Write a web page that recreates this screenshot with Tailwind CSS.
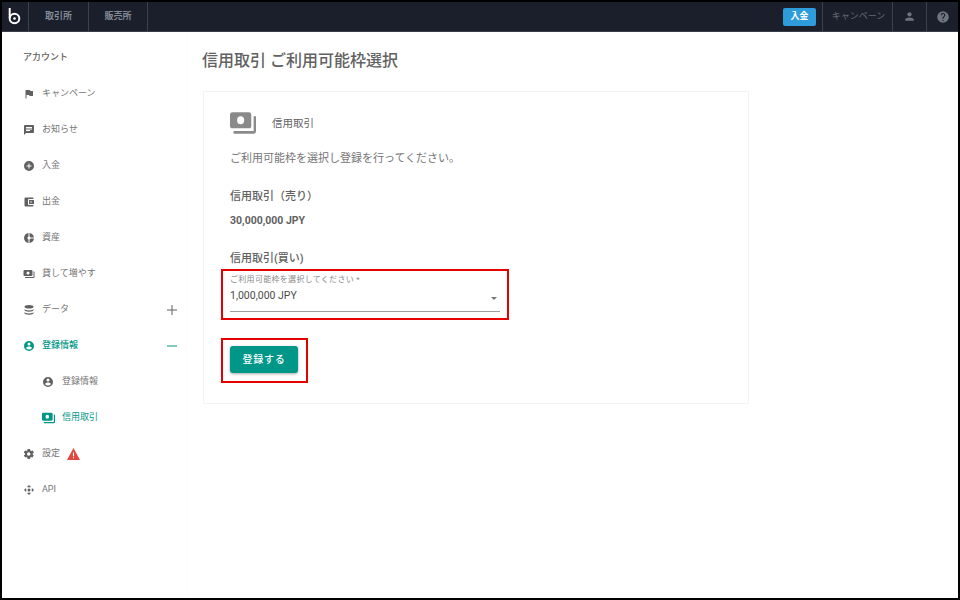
<!DOCTYPE html>
<html lang="ja">
  <head>
    <meta charset="UTF-8" />
    <title>信用取引 ご利用可能枠選択</title>
    <script src="https://cdn.jsdelivr.net/npm/@tailwindcss/browser@4"></script>
  </head>
  <body class="font-['Roboto','Noto_Sans_CJK_JP',sans-serif]">
    <div class="w-[960px] h-[600px] border-2 border-black bg-white flex flex-col overflow-hidden">
      <!-- Header -->
      <header class="h-[30px] bg-[#1b1f2c] flex items-stretch shrink-0 text-[9px] font-bold text-[#858b97] border-b border-[#3a3e49]">
        <div class="w-[27px] flex items-center justify-center border-r border-[#3d414c]">
          <svg class="-ml-[2px]" width="13" height="17" viewBox="0 0 13 17" fill="none" stroke="#fff" stroke-width="2"><path d="M1.700 0v10"/><circle cx="6.500" cy="10.500" r="4.800"/><circle cx="6.500" cy="10.500" r="1.300" fill="#fff" stroke="none"/></svg>
        </div>
        <div class="w-[60px] flex items-center justify-center border-r border-[#3d414c]">取引所</div>
        <div class="w-[59px] flex items-center justify-center border-r border-[#3d414c]">販売所</div>
        <div class="ml-auto flex items-stretch">
          <div class="flex items-center pr-[6px]">
            <span class="w-[33px] h-[18px] bg-[#2e9bda] rounded-[2px] text-white flex items-center justify-center">入金</span>
          </div>
          <div class="w-[70px] pl-[2px] flex items-center justify-center border-l border-[#3d414c] font-normal text-[#666a75]">キャンペーン</div>
          <div class="w-[34px] flex items-center justify-center border-l border-[#3d414c]">
            <svg width="13" height="13" viewBox="0 0 24 24" fill="#70747e"><path d="M12 12c2.200 0 4-1.800 4-4s-1.800-4-4-4-4 1.800-4 4 1.800 4 4 4zm0 2c-2.700 0-8 1.300-8 4v2h16v-2c0-2.700-5.300-4-8-4z"/></svg>
          </div>
          <div class="w-[32px] flex items-center justify-center border-l border-[#3d414c]">
            <svg width="14" height="14" viewBox="0 0 24 24" fill="#70747e"><path d="M12 2a10 10 0 100 20 10 10 0 000-20zm1 17h-2v-2h2v2zm2.100-7.700l-.9.900c-.7.700-1.200 1.300-1.200 2.800h-2v-.5c0-1.100.5-2.100 1.200-2.800l1.200-1.300c.4-.3.600-.8.600-1.400a2 2 0 00-4 0H8a4 4 0 018 0c0 .9-.4 1.700-.9 2.300z"/></svg>
          </div>
        </div>
      </header>

      <div class="flex flex-1">
        <!-- Sidebar -->
        <nav class="w-[186px] shrink-0 pt-[8px] text-[9px] text-[#757575] border-r border-[#fbfbfb]">
          <div class="h-[36px] pl-[21px] flex items-center font-medium text-[#616161]">アカウント</div>
          <ul>
            <li class="h-[36px] pl-[21px] flex items-center gap-[7px]">
              <svg class="w-[12px] h-[12px]" viewBox="0 0 24 24" fill="#616161"><path d="M14.400 6L14 4H5v17h2v-7h5.600l.4 2h7V6z"/></svg>
              キャンペーン
            </li>
            <li class="h-[36px] pl-[21px] flex items-center gap-[7px]">
              <svg class="w-[12px] h-[12px]" viewBox="0 0 24 24" fill="#616161"><path d="M20 2H4a2 2 0 00-2 2v18l4-4h14a2 2 0 002-2V4a2 2 0 00-2-2zM6 9h12v2H6zm8 5H6v-2h8zm4-6H6V6h12z"/></svg>
              お知らせ
            </li>
            <li class="h-[36px] pl-[21px] flex items-center gap-[7px]">
              <svg class="w-[12px] h-[12px]" viewBox="0 0 24 24" fill="#616161"><path d="M12 2a10 10 0 100 20 10 10 0 000-20zm5 11h-4v4h-2v-4H7v-2h4V7h2v4h4z"/></svg>
              入金
            </li>
            <li class="h-[36px] pl-[21px] flex items-center gap-[7px]">
              <svg class="w-[12px] h-[12px]" viewBox="0 0 24 24" fill="#616161"><path d="M21 18v1a2 2 0 01-2 2H5a2 2 0 01-2-2V5a2 2 0 012-2h14a2 2 0 012 2v1h-9a2 2 0 00-2 2v8a2 2 0 002 2zm-9-2h10V8H12zm4-2.500a1.500 1.500 0 110-3 1.500 1.500 0 010 3z"/></svg>
              出金
            </li>
            <li class="h-[36px] pl-[21px] flex items-center gap-[7px]">
              <svg class="w-[12px] h-[12px]" viewBox="0 0 24 24" fill="#616161"><path d="M11 9.160V2c-5 .5-9 4.790-9 10s4 9.500 9 10v-7.160c-1-.41-2-1.520-2-2.840s1-2.430 2-2.840zM14.860 11H22c-.48-4.750-4-8.530-9-9v7.160c1 .3 1.520.98 1.860 1.840zM13 14.840V22c5-.47 8.520-4.250 9-9h-7.140c-.34.860-.860 1.540-1.860 1.840z"/></svg>
              資産
            </li>
            <li class="h-[36px] pl-[21px] flex items-center gap-[7px]">
              <svg class="w-[12px] h-[12px]" viewBox="0 0 24 24" fill="#616161"><path d="M19 14V6a2 2 0 00-2-2H3a2 2 0 00-2 2v8a2 2 0 002 2h14a2 2 0 002-2zm-9-1a3 3 0 110-6 3 3 0 010 6zm13-6v11a2 2 0 01-2 2H4v-2h17V7z"/></svg>
              貸して増やす
            </li>
            <li class="h-[36px] pl-[21px] pr-[10px] flex items-center gap-[7px]">
              <svg class="w-[12px] h-[12px]" viewBox="0 0 24 24" fill="#616161"><ellipse cx="12" cy="5.500" rx="9" ry="3.500"/><path d="M3 9.500c0 2 4 3.500 9 3.500s9-1.500 9-3.500V12c0 2-4 3.500-9 3.500S3 14 3 12zm0 6c0 2 4 3.500 9 3.500s9-1.500 9-3.500V18c0 2-4 3.500-9 3.500S3 20 3 18z"/></svg>
              データ
              <svg class="ml-auto w-[10px] h-[10px]" viewBox="0 0 10 10" stroke="#616161" stroke-width="1"><path d="M0 5h10M5 0v10"/></svg>
            </li>
            <li class="h-[36px] pl-[21px] pr-[10px] flex items-center gap-[7px] text-[#009688] font-medium">
              <svg class="w-[12px] h-[12px]" viewBox="0 0 24 24" fill="#009688"><path d="M12 2a10 10 0 100 20 10 10 0 000-20zm0 3a3 3 0 110 6 3 3 0 010-6zm0 14.200a7.200 7.200 0 01-6-3.200c0-2 4-3.100 6-3.100s6 1.100 6 3.100a7.200 7.200 0 01-6 3.200z"/></svg>
              登録情報
              <svg class="ml-auto w-[10px] h-[10px]" viewBox="0 0 10 10" stroke="#009688" stroke-width="1"><path d="M0 5h10"/></svg>
            </li>
            <li class="h-[36px] pl-[40px] flex items-center gap-[8px]">
              <svg class="w-[12px] h-[12px]" viewBox="0 0 24 24" fill="#616161"><path d="M12 2a10 10 0 100 20 10 10 0 000-20zm0 3a3 3 0 110 6 3 3 0 010-6zm0 14.200a7.200 7.200 0 01-6-3.200c0-2 4-3.100 6-3.100s6 1.100 6 3.100a7.200 7.200 0 01-6 3.200z"/></svg>
              登録情報
            </li>
            <li class="h-[36px] pl-[40px] flex items-center gap-[7px] text-[#009688]">
              <svg class="w-[13px] h-[12px]" viewBox="1 3 22 18" preserveAspectRatio="none" fill="#009688"><path d="M19 14V6a2 2 0 00-2-2H3a2 2 0 00-2 2v8a2 2 0 002 2h14a2 2 0 002-2zm-9-1a3 3 0 110-6 3 3 0 010 6zm13-6v11a2 2 0 01-2 2H4v-2h17V7z"/></svg>
              信用取引
            </li>
            <li class="h-[36px] pl-[21px] flex items-center gap-[7px]">
              <svg class="w-[12px] h-[12px]" viewBox="0 0 24 24" fill="#616161"><path d="M19.400 13a7.500 7.500 0 000-2l2.100-1.600a.5.5 0 00.1-.6l-2-3.500a.5.5 0 00-.6-.2l-2.500 1a7.300 7.300 0 00-1.700-1L14 2.400a.5.5 0 00-.5-.4h-4a.5.5 0 00-.5.400L8.700 5a7.700 7.700 0 00-1.700 1l-2.500-1a.5.5 0 00-.6.2l-2 3.500a.5.5 0 00.1.6L4.100 11a7.900 7.900 0 000 2L2 14.600a.5.5 0 00-.1.6l2 3.500c.1.200.4.300.6.200l2.500-1c.5.400 1.100.7 1.700 1l.4 2.700c0 .2.200.4.500.4h4c.3 0 .5-.2.500-.4l.4-2.700a7.300 7.300 0 001.700-1l2.500 1c.2.100.5 0 .6-.2l2-3.500a.5.5 0 00-.1-.6zM11.500 15.500a3.500 3.500 0 110-7 3.500 3.500 0 010 7z"/></svg>
              <span>設定</span>
              <svg class="w-[13px] h-[12px]" viewBox="0 0 24 22"><path d="M12 0L24 22H0z" fill="#e0483e"/><path d="M11 8h2v7h-2zm0 9h2v2h-2z" fill="#fff"/></svg>
            </li>
            <li class="h-[36px] pl-[21px] flex items-center gap-[7px]">
              <svg class="w-[12px] h-[12px]" viewBox="0 0 24 24" fill="#616161"><path d="M15.540 5.540L13.770 7.300 12 5.540 10.230 7.300 8.460 5.540 12 2zm2.920 10l-1.760-1.770L18.460 12l-1.760-1.770 1.760-1.770L22 12zm-10 2.920l1.770-1.760L12 18.460l1.770-1.760 1.770 1.760L12 22zm-2.920-10l1.760 1.770L5.540 12l1.760 1.770-1.760 1.770L2 12z"/><circle cx="12" cy="12" r="3"/></svg>
              API
            </li>
          </ul>
        </nav>

        <!-- Main -->
        <main class="flex-1 pl-[14px] pt-[18px]">
          <h1 class="text-[16px] leading-[22px] font-medium text-[#616161]">信用取引 ご利用可能枠選択</h1>
          <section class="mt-[19px] ml-[1px] w-[546px] h-[313px] border border-[#f3f3f3] pl-[26px] pt-[19px] text-[#616161]">
            <div class="flex items-center h-[24px] text-[10.500px]">
              <svg class="w-[26px] h-[24px]" viewBox="1 3 22 18" preserveAspectRatio="none" fill="#8a8a8a"><path d="M19 14V6a2 2 0 00-2-2H3a2 2 0 00-2 2v8a2 2 0 002 2h14a2 2 0 002-2zm-9-1a3 3 0 110-6 3 3 0 010 6zm13-6v11a2 2 0 01-2 2H4v-2h17V7z"/></svg>
              <span class="ml-[16px] pt-[1px]">信用取引</span>
            </div>
            <p class="mt-[15px] text-[11px] leading-[18px] text-[#757575]">ご利用可能枠を選択し登録を行ってください。</p>
            <h2 class="mt-[20px] text-[11px] leading-[18px] font-medium">信用取引（売り）</h2>
            <p class="mt-[6px] text-[10.500px] leading-[18px] font-bold">30,000,000 JPY</p>
            <h2 class="mt-[20px] text-[11px] leading-[18px] font-medium">信用取引(買い)</h2>
            <div class="-ml-[9px] w-[288px] h-[51px] border-2 border-[#e60000] px-[7px] pt-[3px] mt-[1px]">
              <div class="h-[38px] border-b border-[#9e9e9e] relative">
                <div class="text-[8px] leading-[12px] text-[#8a8a8a] tracking-[0.3px]">ご利用可能枠を選択してください *</div>
                <div class="text-[10.500px] leading-[16px] mt-[2px] text-[#4a4a4a]">1,000,000 JPY</div>
                <svg class="absolute right-[3px] top-[23px] w-[6px] h-[3px]" viewBox="0 0 8 4" preserveAspectRatio="none" fill="#757575"><path d="M0 0h8L4 4z"/></svg>
              </div>
            </div>
            <div class="-ml-[9px] mt-[18px] w-[87px] h-[45px] border-2 border-[#e60000] pl-[7px] pt-[6px]">
              <button class="w-[68px] h-[27px] bg-[#009688] rounded-[3px] text-white text-[10px] font-medium tracking-[0.8px] shadow-[0_1px_3px_rgba(0,0,0,0.35)]">登録する</button>
            </div>
          </section>
        </main>
      </div>
    </div>
  </body>
</html>
